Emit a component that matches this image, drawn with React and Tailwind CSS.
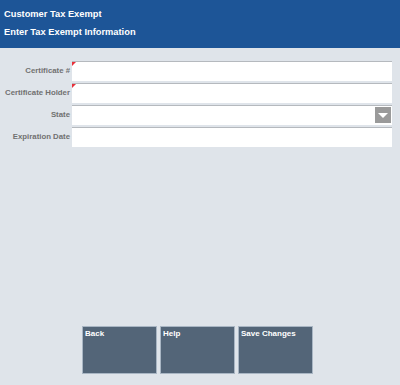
export default function App() {
  const fields = [
    { label: 'Certificate #', required: true },
    { label: 'Certificate Holder', required: true },
    { label: 'State', select: true },
    { label: 'Expiration Date' },
  ]

  return (
    <div className="w-[400px] h-[385px] bg-[#dfe4ea] flex flex-col font-['Liberation_Sans',Arial,sans-serif] overflow-hidden">
      {/* Header */}
      <div className="h-[48px] bg-[#1d5597] text-white font-bold text-[9.3px] px-[4px] flex flex-col">
        <div className="h-[28px] flex items-center pt-[1px]">Customer Tax Exempt</div>
        <div className="h-[10px] flex items-center">Enter Tax Exempt Information</div>
      </div>

      {/* Form */}
      <div className="flex flex-col gap-[2px] pt-[13px] pr-[8px]">
        {fields.map((f) => (
          <div key={f.label} className="flex items-stretch h-[20px]">
            <div className="w-[71px] pr-[1px] flex items-center justify-end text-[7.8px] font-bold text-[#717171] whitespace-nowrap">
              {f.label}
            </div>
            <div className="relative flex-1 bg-white border-t border-[#b5b9be] ml-[1px]">
              {f.required && (
                <div className="absolute left-0 top-0 w-0 h-0 border-t-[4px] border-t-[#e8303a] border-r-[4px] border-r-transparent" />
              )}
              {f.select && (
                <div className="absolute right-[1px] top-[1px] w-[16px] h-[16px] bg-[#9a9a9a] flex items-center justify-center">
                  <div className="w-0 h-0 border-l-[5px] border-l-transparent border-r-[5px] border-r-transparent border-t-[5px] border-t-white" />
                </div>
              )}
            </div>
          </div>
        ))}
      </div>

      <div className="flex-1" />

      {/* Buttons */}
      <div className="flex gap-[3px] pl-[82px] pb-[11px]">
        {['Back', 'Help', 'Save Changes'].map((b) => (
          <button
            key={b}
            className="w-[75px] h-[48px] bg-[#536578] border border-[#a9b6c4] text-white text-[8px] font-bold text-left flex items-start px-[2px] pt-[1px]"
          >
            {b}
          </button>
        ))}
      </div>
    </div>
  )
}
